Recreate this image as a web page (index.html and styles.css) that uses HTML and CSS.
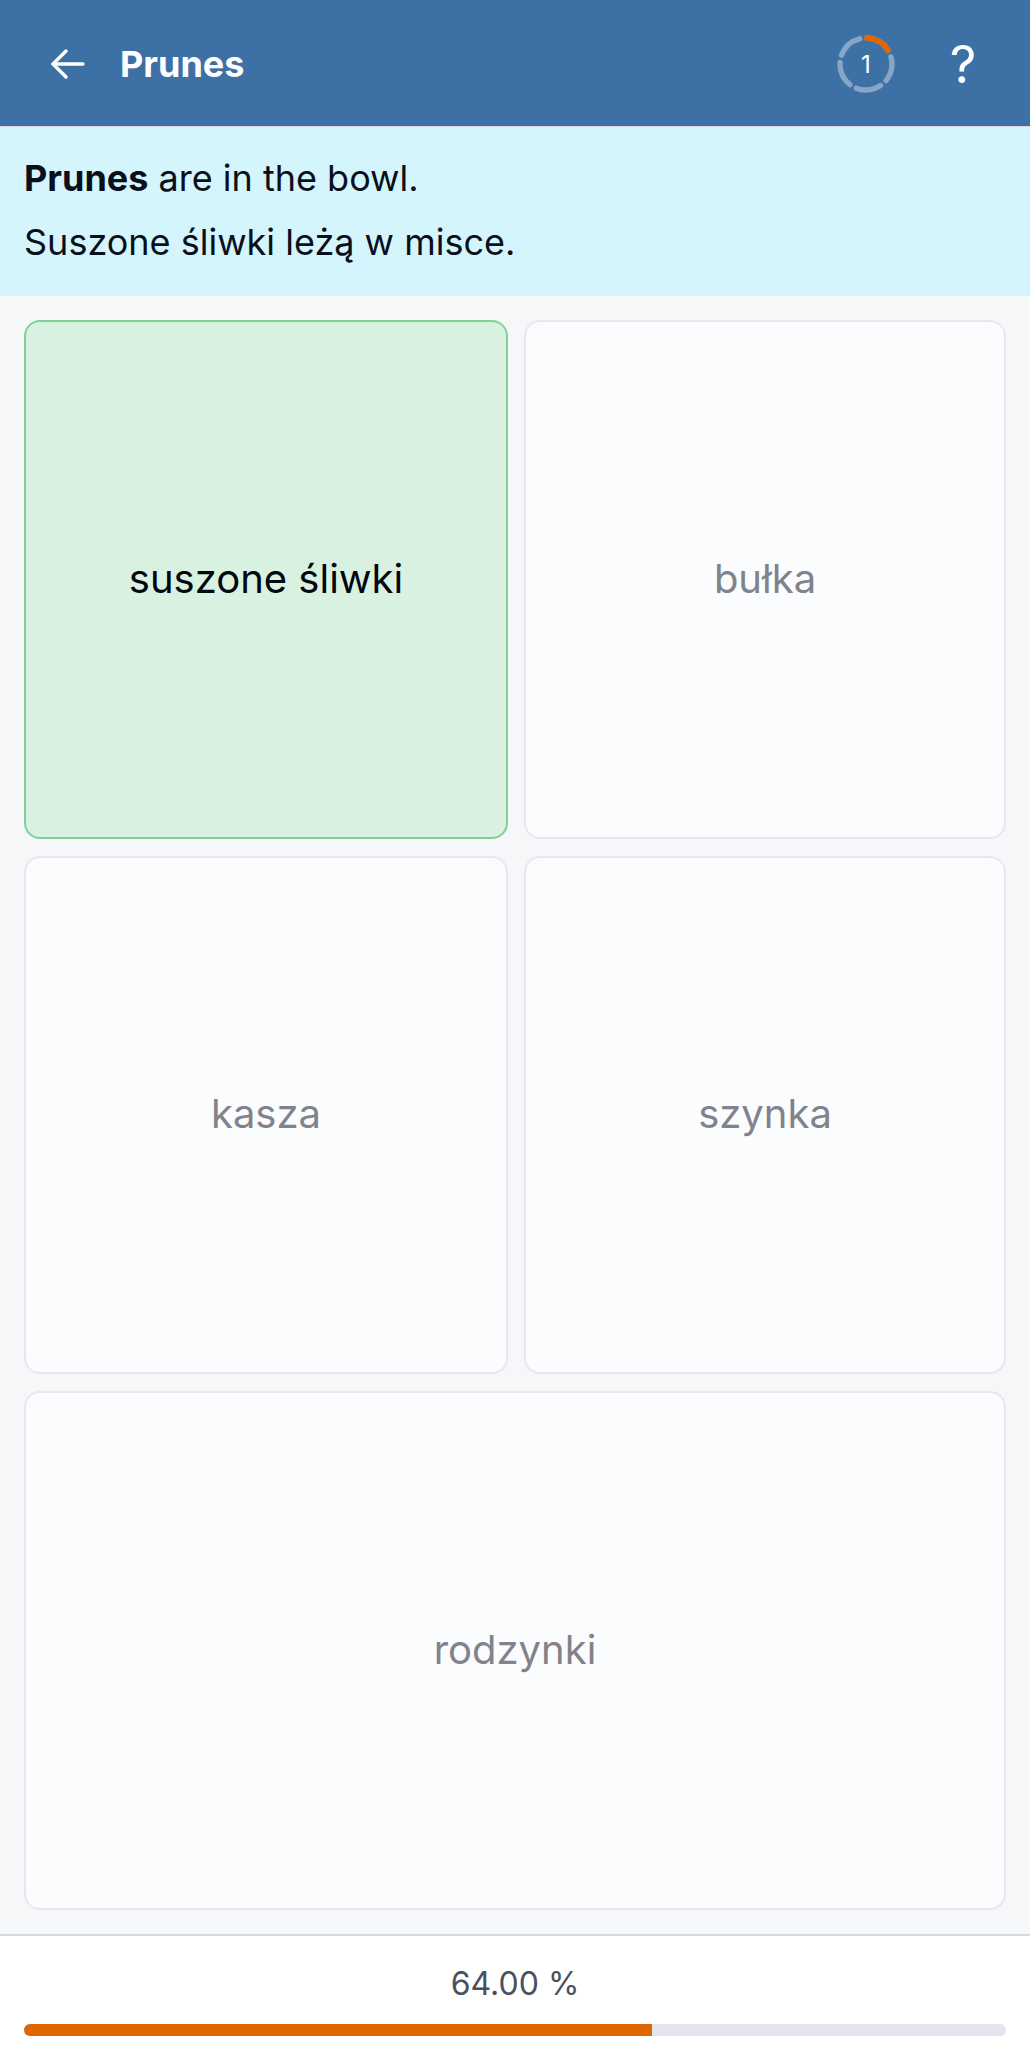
FILE: index.html
```html
<!DOCTYPE html>
<html lang="en">
  <head>
    <meta charset="UTF-8" />
    <meta name="viewport" content="width=device-width, initial-scale=1.0" />
    <title>Prunes</title>
    <link rel="stylesheet" href="styles.css">
  </head>
  <body>
    <div class="app">
      <header class="topbar">
        <button class="icon-btn back-btn" type="button" aria-label="Back">
          <svg width="36" height="32" viewBox="0 0 36 32" fill="none" stroke="#fff" stroke-width="3.4" stroke-linecap="round" stroke-linejoin="round">
            <path d="M33 16H3"/>
            <path d="M16 3 3 16l13 13"/>
          </svg>
        </button>
        <h1 class="title">Prunes</h1>
        <div class="timer">
          <svg width="58" height="58" viewBox="0 0 58 58" fill="none" stroke-width="5.4" stroke-linecap="round">
            <g transform="rotate(-88 29 29)">
              <circle cx="29" cy="29" r="26" pathLength="100" stroke="#86a6c8" stroke-dasharray="15.5 4.5"/>
              <circle cx="29" cy="29" r="26" pathLength="100" stroke="#e06600" stroke-dasharray="15.5 84.5"/>
            </g>
          </svg>
          <span class="timer-count">1</span>
        </div>
        <span class="help">?</span>
      </header>

      <section class="sentence">
        <p><strong>Prunes</strong> are in the bowl.</p>
        <p>Suszone śliwki leżą w misce.</p>
      </section>

      <main class="answers">
        <div class="answer correct">suszone śliwki</div>
        <div class="answer">bułka</div>
        <div class="answer">kasza</div>
        <div class="answer">szynka</div>
        <div class="answer wide">rodzynki</div>
      </main>

      <footer class="progress">
        <div class="progress-label">64.00 %</div>
        <div class="progress-track">
          <div class="progress-fill" style="width: 64%"></div>
        </div>
      </footer>
    </div>
  </body>
</html>
```

FILE: styles.css
```css
* {
  box-sizing: border-box;
}
body {
  margin: 0;
  font-family: Inter, "Noto Sans", sans-serif;
  background: #f6f7f9;
}
.app {
  display: flex;
  flex-direction: column;
  height: 2060px;
}
.topbar {
  display: flex;
  align-items: center;
  height: 127px;
  padding: 2px 52px 0 50px;
  background: #3d71a6;
  border-bottom: 1px solid #d5d8dc;
  color: white;
}
.icon-btn {
  display: flex;
  padding: 0;
  background: none;
  border: none;
}
.title {
  flex: 1;
  margin: 0 0 0 34px;
  font-size: 36px;
  font-weight: 700;
}
.timer {
  position: relative;
  width: 58px;
  height: 58px;
  margin-right: 53px;
}
.timer-count {
  position: absolute;
  inset: 0;
  display: flex;
  align-items: center;
  justify-content: center;
  font-size: 24px;
}
.help {
  width: 30px;
  padding-top: 1px;
  font-size: 52px;
  font-weight: 400;
  line-height: 1;
  text-align: center;
}
.sentence {
  height: 169px;
  padding: 29px 24px 0;
  background: #d4f5fb;
  color: #0a0f1c;
  font-size: 36px;
  line-height: 44px;
}
.sentence p {
  margin: 0 0 20px;
}
.answers {
  flex: 1;
  display: grid;
  grid-template-columns: 484px 1fr;
  grid-template-rows: repeat(3, 1fr);
  gap: 17px 16px;
  padding: 24px;
}
.answer {
  display: flex;
  align-items: center;
  justify-content: center;
  padding-bottom: 2px;
  background: #fbfcfe;
  border: 2px solid #e6e8eb;
  border-radius: 16px;
  color: #81838c;
  font-size: 40px;
}
.answer.correct {
  background: #d9f1e0;
  border-color: #7fd198;
  color: #02060f;
}
.answer.wide {
  grid-column: 1 / 3;
}
.progress {
  height: 126px;
  padding: 30px 24px 0;
  background: white;
  border-top: 2px solid #d5d8dc;
}
.progress-label {
  color: #4a5060;
  font-size: 32px;
  line-height: 36px;
  text-align: center;
}
.progress-track {
  height: 12px;
  margin-top: 22px;
  background: #e2e5ed;
  border-radius: 6px;
  overflow: hidden;
}
.progress-fill {
  height: 100%;
  background: #e06600;
}
```
